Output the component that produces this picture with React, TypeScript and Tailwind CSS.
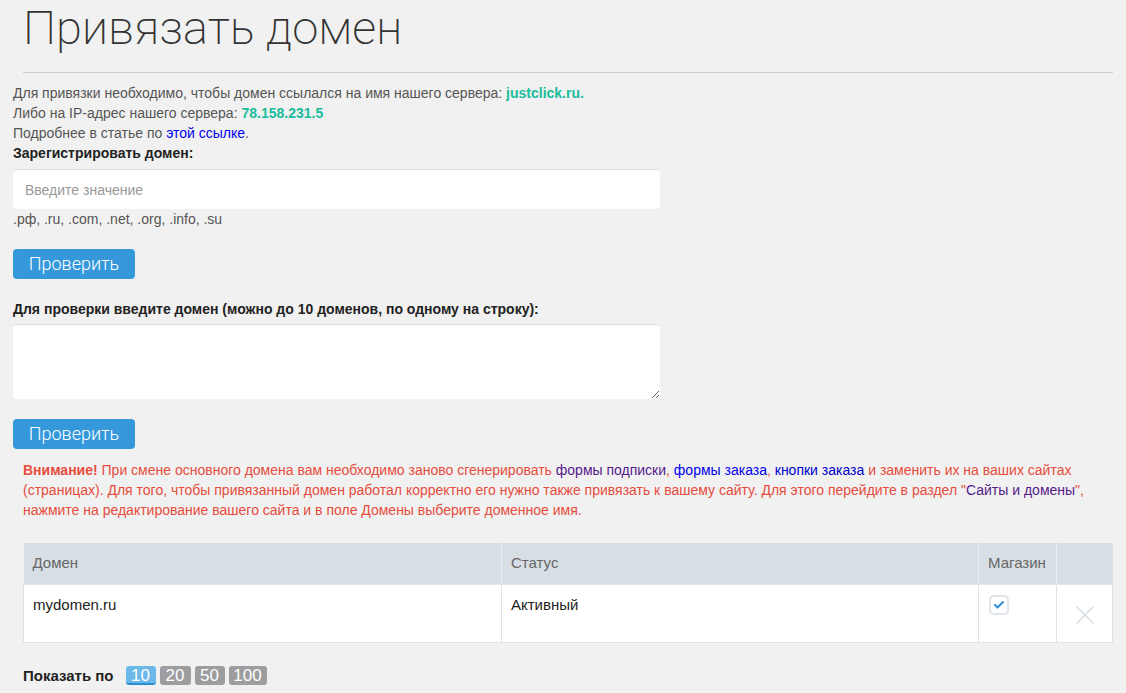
import { Check, X } from 'lucide-react'

export default function App() {
  return (
    <div
      className="min-h-screen bg-[#f1f1f1] text-[14px] leading-5 text-[#555]"
      style={{ fontFamily: '"Liberation Sans", Arial, sans-serif' }}
    >
      {/* Header */}
      <div className="pl-[23px] pr-[13px]">
        <h1
          className="pt-[3px] text-[47px] font-light leading-[50px] text-[#333]"
          style={{ fontFamily: 'Roboto, "Liberation Sans", sans-serif', fontWeight: 200 }}
        >
          Привязать домен
        </h1>
        <div className="mt-[19px] border-t border-[#cfcfcf]" />
      </div>

      {/* Form */}
      <div className="mt-[10px] pl-[13px]">
        <p>
          Для привязки необходимо, чтобы домен ссылался на имя нашего сервера:{' '}
          <b className="text-[#1abc9c]">justclick.ru.</b>
        </p>
        <p>
          Либо на IP-адрес нашего сервера: <b className="text-[#1abc9c]">78.158.231.5</b>
        </p>
        <p>
          Подробнее в статье по <a className="text-[#0000ee]">этой ссылке</a>.
        </p>
        <label className="block font-bold text-[#222]">Зарегистрировать домен:</label>
        <input
          className="mt-[6px] block h-10 w-[647px] rounded-[4px] border-t border-[#ddd] bg-white px-3 text-[14px] text-[#333] outline-none placeholder:text-[#999]"
          placeholder="Введите значение"
        />
        <p>.рф, .ru, .com, .net, .org, .info, .su</p>
        <CheckButton />

        <label className="mt-5 block font-bold text-[#222]">
          Для проверки введите домен (можно до 10 доменов, по одному на строку):
        </label>
        <textarea className="mt-[5px] block h-[75px] w-[647px] rounded-[4px] border-t border-[#ddd] bg-white px-3 py-2 outline-none" />
        <CheckButton />
      </div>

      {/* Warning */}
      <p className="mt-[11px] pl-[23px] pr-[20px] text-[#e74c3c]">
        <b>Внимание!</b> При смене основного домена вам необходимо заново сгенерировать{' '}
        <a className="text-[#551a8b]">формы подписки</a>, <a className="text-[#0000ee]">формы заказа</a>,{' '}
        <a className="text-[#0000cc]">кнопки заказа</a> и заменить их на ваших сайтах (страницах). Для того,
        чтобы привязанный домен работал корректно его нужно также привязать к вашему сайту. Для этого
        перейдите в раздел "<a className="text-[#551a8b]">Сайты и домены</a>", нажмите на редактирование
        вашего сайта и в поле Домены выберите доменное имя.
      </p>

      {/* Table */}
      <div className="mt-[23px] pl-[23px] pr-[13px]">
        <table className="w-full border-collapse text-[15px]">
          <thead>
            <tr className="h-[41px] bg-[#d7dfe4] text-left text-[#666]">
              <th className="w-[478px] border-r border-[#e8eef2] pl-[9px] font-normal">Домен</th>
              <th className="w-[477px] border-r border-[#e8eef2] pl-[9px] font-normal">Статус</th>
              <th className="w-[78px] border-r border-[#e8eef2] pl-[9px] font-normal">Магазин</th>
              <th className="font-normal" />
            </tr>
          </thead>
          <tbody>
            <tr className="h-[58px] bg-white align-top text-[#222]">
              <td className="border border-[#dde4ea] px-[9px] pt-[10px]">mydomen.ru</td>
              <td className="border border-[#dde4ea] px-[9px] pt-[10px]">Активный</td>
              <td className="border border-[#dde4ea] pl-[10px] pt-[10px]">
                <span className="flex h-[20px] w-[20px] items-center justify-center rounded-[5px] border-2 border-[#dfe5ea]">
                  <Check className="h-3 w-3 text-[#2f8fd8]" strokeWidth={4} />
                </span>
              </td>
              <td className="border border-[#dde4ea] align-middle">
                <X className="mx-auto mt-[3px] h-[32px] w-[32px] text-[#d3dbe1]" strokeWidth={1} />
              </td>
            </tr>
          </tbody>
        </table>

        {/* Pagination */}
        <div className="mt-[23px] flex items-center">
          <span className="mr-[12px] text-[15px] font-bold text-[#222]">Показать по</span>
          <div className="flex gap-1 text-[17px] leading-[19px] font-light text-white">
            <span className="h-[19px] w-[30px] rounded-[3px] border-b-2 border-[#2b8fd6] bg-[#6cb8e8] text-center">
              10
            </span>
            <span className="h-[19px] w-[31px] rounded-[3px] bg-[#9d9d9f] text-center">20</span>
            <span className="h-[19px] w-[30px] rounded-[3px] bg-[#9d9d9f] text-center">50</span>
            <span className="h-[19px] w-[38px] rounded-[3px] bg-[#9d9d9f] text-center">100</span>
          </div>
        </div>
      </div>
    </div>
  )
}

function CheckButton() {
  return (
    <button
      className="mt-5 block h-[30px] w-[122px] rounded-[4px] bg-[#3498db] text-[18px] font-light text-white"
      style={{ fontFamily: 'Roboto, "Liberation Sans", sans-serif' }}
    >
      Проверить
    </button>
  )
}
